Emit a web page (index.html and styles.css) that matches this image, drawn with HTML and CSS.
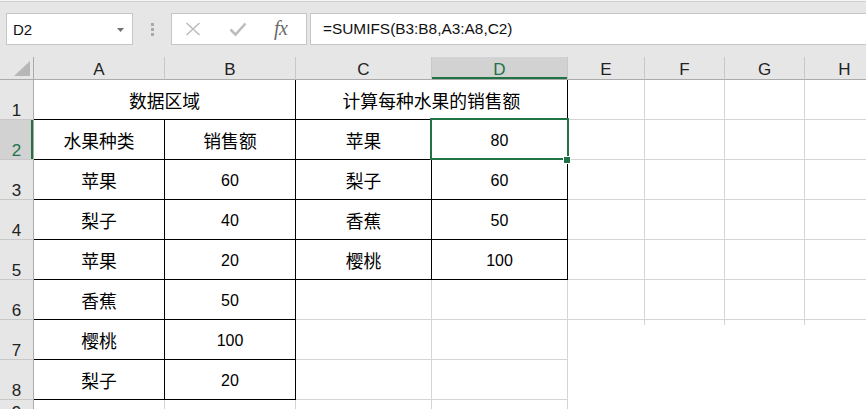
FILE: index.html
```html
<!DOCTYPE html>
<html lang="zh-CN">
<head>
<meta charset="utf-8">
<title>SUMIFS</title>
<link rel="stylesheet" href="styles.css">
</head>
<body>
<div class="app">
  <div class="toolbar">
    <div class="namebox">
      <span class="name">D2</span>
      <svg class="drop" width="7" height="4" viewBox="0 0 7 4"><path d="M0 0H7L3.5 4Z" fill="#707070"/></svg>
    </div>
    <div class="grip"><i></i><i></i><i></i></div>
    <div class="fxbox">
      <svg class="ico" width="16" height="14" viewBox="0 0 16 14"><path d="M1.5 1L14.5 13M14.5 1L1.5 13" stroke="#bdbdbd" stroke-width="1.6" fill="none"/></svg>
      <svg class="ico" width="18" height="15" viewBox="0 0 18 15"><path d="M1.5 7.5L6.5 12.5L16.5 1.5" stroke="#bdbdbd" stroke-width="2.6" fill="none"/></svg>
      <span class="fx">fx</span>
    </div>
    <div class="formula">=SUMIFS(B3:B8,A3:A8,C2)</div>
  </div>
  <div class="sheet">
    <div class="corner"><svg width="16" height="15" viewBox="0 0 16 15"><path d="M16 0V15H0Z" fill="#b7b7b7"/></svg></div>
    <div class="ch">A</div><div class="ch">B</div><div class="ch">C</div><div class="ch on">D</div><div class="ch">E</div><div class="ch">F</div><div class="ch">G</div><div class="ch">H</div>

    <div class="rh">1</div>
    <div class="c t zh s2">数据区域</div>
    <div class="c t zh s2">计算每种水果的销售额</div>
    <div class="c"></div><div class="c"></div><div class="c"></div><div class="c"></div>

    <div class="rh on">2</div>
    <div class="c t zh">水果种类</div><div class="c t zh">销售额</div><div class="c t zh">苹果</div><div class="c t">80</div>
    <div class="c"></div><div class="c"></div><div class="c"></div><div class="c"></div>

    <div class="rh">3</div>
    <div class="c t zh">苹果</div><div class="c t">60</div><div class="c t zh">梨子</div><div class="c t">60</div>
    <div class="c"></div><div class="c"></div><div class="c"></div><div class="c"></div>

    <div class="rh">4</div>
    <div class="c t zh">梨子</div><div class="c t">40</div><div class="c t zh">香蕉</div><div class="c t">50</div>
    <div class="c"></div><div class="c"></div><div class="c"></div><div class="c"></div>

    <div class="rh">5</div>
    <div class="c t zh">苹果</div><div class="c t">20</div><div class="c t zh">樱桃</div><div class="c t">100</div>
    <div class="c"></div><div class="c"></div><div class="c"></div><div class="c"></div>

    <div class="rh">6</div>
    <div class="c t zh">香蕉</div><div class="c t">50</div><div class="c"></div><div class="c"></div>
    <div class="c stub"></div><div class="c stub"></div><div class="c stub"></div><div class="c stub"></div>

    <div class="rh">7</div>
    <div class="c t zh">樱桃</div><div class="c t">100</div><div class="c"></div><div class="c"></div>
    <div class="b"></div><div class="b"></div><div class="b"></div><div class="b"></div>

    <div class="rh">8</div>
    <div class="c t zh">梨子</div><div class="c t">20</div><div class="c"></div><div class="c"></div>
    <div class="b"></div><div class="b"></div><div class="b"></div><div class="b"></div>

    <div class="rh">9</div>
    <div class="c"></div><div class="c"></div><div class="c"></div><div class="c"></div>
    <div class="b"></div><div class="b"></div><div class="b"></div><div class="b"></div>

    <div class="sel"></div>
    <div class="handle"></div>
  </div>
</div>
</body>
</html>
```

FILE: styles.css
```css
* { box-sizing: border-box; }
body {
  margin: 0;
  background: #e6e6e6;
  font-family: "Liberation Sans", Arial, "Noto Sans CJK SC", sans-serif;
  color: #000;
}
.app {
  width: 866px;
  height: 409px;
  overflow: hidden;
  background: #e6e6e6;
}
.toolbar {
  height: 57px;
  display: flex;
  align-items: flex-start;
  border-top: 1px solid #f4f4f4;
  box-shadow: inset 0 1px 0 #d0d0d0;
  padding-top: 12px;
}
.namebox {
  margin-left: 6px;
  width: 127px;
  height: 32px;
  background: #fff;
  border: 1px solid #c6c6c6;
  display: flex;
  align-items: center;
  justify-content: space-between;
  padding: 0 8px 0 6px;
}
.name {
  font-size: 15px;
  color: #111;
}
.drop { margin-top: 1px; }
.grip {
  width: 38px;
  height: 32px;
  display: flex;
  flex-direction: column;
  align-items: center;
  justify-content: center;
  gap: 2px;
  padding-left: 1px;
}
.grip i {
  display: block;
  width: 3px;
  height: 3px;
  background: #a9a9a9;
}
.fxbox {
  width: 136px;
  height: 32px;
  background: #fff;
  border: 1px solid #c6c6c6;
  display: flex;
  align-items: center;
  padding-left: 13px;
}
.fxbox .ico:first-child { margin-right: 28px; }
.fxbox .ico:nth-child(2) { margin-right: 27px; }
.fx {
  font-family: "Liberation Serif", "Times New Roman", serif;
  font-style: italic;
  font-size: 20px;
  color: #6a6a6a;
  letter-spacing: -0.5px;
  margin-top: -1px;
}
.formula {
  flex: 1;
  margin-left: 3px;
  margin-right: -20px;
  height: 32px;
  background: #fff;
  border: 1px solid #c6c6c6;
  display: flex;
  align-items: center;
  padding-left: 12px;
  font-size: 15.4px;
  color: #111;
}
.sheet {
  position: relative;
  display: grid;
  grid-template-columns: 34px 131px 131px 136px 136px 77px 80px 80px 80px;
  grid-template-rows: 23px repeat(8, 40px) 22px;
  background: #fff;
  width: 885px;
}
.corner {
  background: #e6e6e6;
  border-right: 1px solid #ababab;
  border-bottom: 1px solid #ababab;
  display: flex;
  align-items: flex-end;
  justify-content: flex-end;
  padding: 0 3px 3px 0;
}
.ch {
  background: #e6e6e6;
  border-right: 1px solid #c8c8c8;
  border-bottom: 1px solid #ababab;
  display: flex;
  align-items: center;
  justify-content: center;
  padding-top: 3px;
  font-size: 17px;
  color: #222;
}
.ch.on {
  background: #d2d2d2;
  box-shadow: inset 0 -2px 0 #217346;
  color: #217346;
}
.rh {
  background: #e6e6e6;
  border-right: 1px solid #ababab;
  border-bottom: 1px solid #c8c8c8;
  display: flex;
  align-items: flex-end;
  justify-content: center;
  font-size: 17px;
  line-height: 16px;
  color: #222;
}
.rh.on {
  background: #d2d2d2;
  box-shadow: inset -2px 0 0 #217346;
  color: #217346;
}
.c {
  border-right: 1px solid #d4d4d4;
  border-bottom: 1px solid #d4d4d4;
  display: flex;
  align-items: center;
  justify-content: center;
  padding-top: 3px;
  font-size: 16px;
}
.c.t {
  border-right-color: #000;
  border-bottom-color: #000;
}
.stub { position: relative; }
.stub::after {
  content: "";
  position: absolute;
  right: -1px;
  bottom: -6px;
  width: 1px;
  height: 5px;
  background: #d4d4d4;
}
.zh {
  font-family: "Noto Sans CJK SC", "Liberation Sans", sans-serif;
  font-size: 17.8px;
  padding-top: 1px;
}
.s2 { grid-column: span 2; }
.b { background: #fff; }
.sel {
  position: absolute;
  left: 430px;
  top: 61px;
  width: 139px;
  height: 42px;
  border: 2px solid #217346;
}
.handle {
  position: absolute;
  left: 563px;
  top: 99px;
  width: 8px;
  height: 8px;
  background: #217346;
  border: 1px solid #fff;
}
```
